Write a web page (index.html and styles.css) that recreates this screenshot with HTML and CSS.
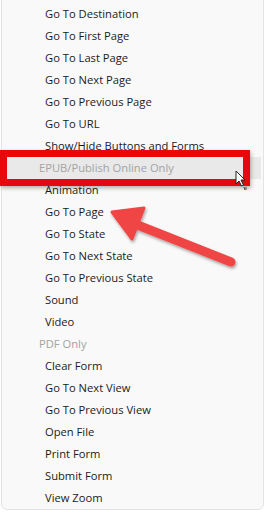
FILE: index.html
```html
<!DOCTYPE html>
<html lang="en">
<head>
  <meta charset="UTF-8" />
  <title>Actions menu</title>
  <link rel="stylesheet" href="styles.css">
</head>
<body>

  <div class="menu">
    <div class="item">Go To Destination</div>
    <div class="item">Go To First Page</div>
    <div class="item">Go To Last Page</div>
    <div class="item">Go To Next Page</div>
    <div class="item">Go To Previous Page</div>
    <div class="item">Go To URL</div>
    <div class="item">Show/Hide Buttons and Forms</div>
    <div class="head hover">EPUB/Publish Online Only</div>
    <div class="item">Animation</div>
    <div class="item">Go To Page</div>
    <div class="item">Go To State</div>
    <div class="item">Go To Next State</div>
    <div class="item">Go To Previous State</div>
    <div class="item">Sound</div>
    <div class="item">Video</div>
    <div class="head">PDF Only</div>
    <div class="item">Clear Form</div>
    <div class="item">Go To Next View</div>
    <div class="item">Go To Previous View</div>
    <div class="item">Open File</div>
    <div class="item">Print Form</div>
    <div class="item">Submit Form</div>
    <div class="item">View Zoom</div>
  </div>

  <!-- callout drawn over the menu -->
  <div class="callout-box"></div>

  <svg class="cursor" width="14" height="22" viewBox="0 0 14 22">
    <path d="M1 1 L1 14 L4 11 L6.5 16 L8.5 15 L6 10 L10 10 Z" fill="#fff" stroke="#222" stroke-width="1"/>
    <path d="M9 17 L10 20 M11 17 L11 20" stroke="#444" stroke-width="1"/>
  </svg>

  <svg class="arrow" width="266" height="512" viewBox="0 0 266 512">
    <defs>
      <filter id="sh" x="-20%" y="-20%" width="140%" height="140%">
        <feDropShadow dx="1" dy="2" stdDeviation="1.5" flood-color="#000" flood-opacity="0.35"/>
      </filter>
    </defs>
    <g filter="url(#sh)">
      <line x1="231" y1="262" x2="130" y2="222" stroke="#ef4444" stroke-width="9" stroke-linecap="round"/>
      <path d="M112 212 L144 208 L132 239 Z" fill="#ef4444" stroke="#ef4444" stroke-width="3" stroke-linejoin="round"/>
    </g>
  </svg>

</body>
</html>
```

FILE: styles.css
```css
body { margin: 0; background: #fff; font-family: "Open Sans", "Noto Sans", sans-serif; }

.menu {
  width: 261px;
  margin-left: 1px;
  margin-top: -6px;
  padding-top: 8px;
  height: 506px;
  background: #f9f9f9;
  border: 1px solid #e3e3e3;
  border-radius: 6px;
}

.item, .head {
  height: 22px;
  line-height: 22px;
  font-size: 11.2px;
  white-space: nowrap;
}
.item { padding-left: 43px; color: #1b1b1b; }
.head { padding-left: 37px; color: #a3a3a3; }
.hover { background: #e9e9e9; margin-right: 2px; }

.callout-box {
  position: absolute;
  left: 0;
  top: 150px;
  width: 236px;
  height: 22px;
  border: 7px solid #e8070b;
  box-shadow: 1px 2px 4px rgba(0,0,0,0.3);
}

.cursor { position: absolute; left: 235px; top: 170px; }
.arrow { position: absolute; left: 0; top: 0; pointer-events: none; }
```
